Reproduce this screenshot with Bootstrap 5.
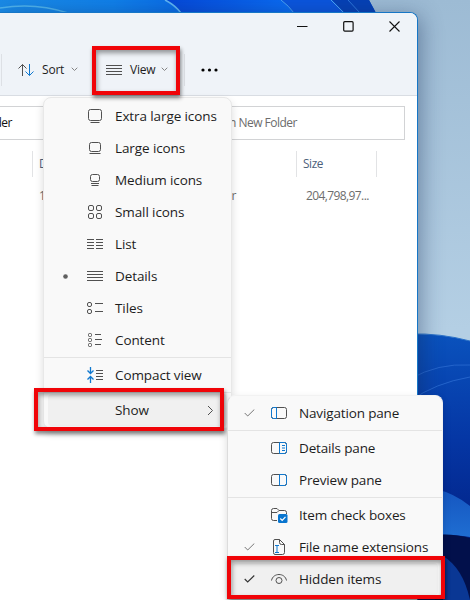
<!DOCTYPE html>
<html lang="en">
<head>
<meta charset="utf-8">
<meta name="viewport" content="width=device-width, initial-scale=1">
<title>New Folder</title>
<link href="https://cdn.jsdelivr.net/npm/bootstrap@5.3.0/dist/css/bootstrap.min.css" rel="stylesheet">
<style>
body{margin:0;background:#fff;font-family:"Open Sans","Noto Sans",sans-serif;color:#1d1d1d}
.desktop{width:470px;height:600px}
.wallpaper{left:0;top:0;z-index:0}
.explorer{z-index:1;width:418px;height:588px;margin-top:12px;border:1px solid #1676c6;border-left:0;border-bottom:0;border-top-right-radius:8px;box-shadow:3px 4px 22px rgba(20,40,80,.42)}
.explorer-head{height:83px;background:#eff3f8;border-bottom:1px solid #d9dde3;border-top-right-radius:7px}
.caption-row{height:27px;padding-right:17px;gap:35px}
.tools{height:56px;font-size:12px;line-height:16px;padding:3px 0 0 1px}
.tools .vr-line{width:1px;height:32px;background:#dde0e5}
.tool-text{letter-spacing:-.2px}
.sort-tool{margin-left:15px;width:61px}
.sort-tool .tool-text,.view-tool .tool-text{margin-left:8px}
.view-tool{margin-left:28px;width:62px}
.view-tool .tool-text{margin-left:7px}
.address{height:34px;margin-top:10px}
.field{border:1px solid #d2d3d5;height:34px;line-height:32px;font-size:12px}
.path-field{width:206px;border-left:0;color:#111}
.path-field .squeeze{margin-left:-8px}
.search-field{width:191px;color:#6c6c6c}
.search-field .squeeze{width:82px;direction:rtl;unicode-bidi:isolate;vertical-align:top}
.field-gap{margin-left:8px}
.squeeze{display:inline-block;letter-spacing:-.5px;white-space:nowrap}
.cols{height:26px;margin-top:11px;padding-top:0;font-size:11.8px;line-height:25px;color:#4c607a}
.cols>div{border-left:1px solid #e2e3e5}
.size-label{letter-spacing:-.4px}
.file{height:20px;margin-top:9px;font-size:12px;line-height:20px;color:#6d6d6d}
.file-kind{width:196px}
.file-size{margin-left:70px;letter-spacing:-.6px}
.flyout{background:#f9f9f9;border-radius:8px;border:1px solid #e8e8e8;box-shadow:0 4px 9px rgba(0,0,0,.14);font-size:13.5px;letter-spacing:-.1px;padding:1px 0}
.main-menu{left:43px;top:97px;width:189px;height:332px;padding-top:2px;z-index:2}
.sub-menu{left:227px;top:395px;width:216px;height:203px;z-index:4;letter-spacing:-.15px;border-color:#f2f2f2 #f2f2f2 #f2f2f2 #dcdcdc}
.entry{height:32px;white-space:nowrap;line-height:20px}
.entry .mark-slot{width:42px;height:32px}
.entry .icon-slot{width:18px;height:18px;margin-right:11px}
.rule{height:1px;margin:1px 0;background:#e4e4e4}
.hover-row{background:#f0f0f0;margin:0 4px;border-radius:4px}
.frame{border:4px solid #f00408;box-shadow:1px 3px 4px rgba(0,0,0,.48),inset 1px 3px 5px rgba(0,0,0,.4);z-index:5}
.frame-view{left:92px;top:46px;width:88px;height:49px}
.frame-show{left:34px;top:388px;width:190px;height:43px;z-index:3}
.frame-hidden{left:227px;top:556px;width:218px;height:43px}
svg{display:block;flex:none}
.ln{fill:none;stroke:#505050;stroke-width:1}
.bl{fill:none;stroke:#0f78cf;stroke-width:1}
.soft{stroke:#858585}
</style>
<script src="https://cdn.jsdelivr.net/npm/bootstrap@5.3.0/dist/js/bootstrap.bundle.min.js"></script>
</head>
<body>
<div class="desktop position-relative overflow-hidden d-flex">
  <svg class="wallpaper position-absolute" width="470" height="600" viewBox="0 0 470 600">
    <defs>
      <linearGradient id="sky" x1="0" y1="0" x2="0" y2="1"><stop offset="0" stop-color="#9dbbd4"/><stop offset=".55" stop-color="#b4cfe4"/></linearGradient>
      <linearGradient id="petal" x1="0" y1="0" x2="1" y2="0"><stop offset="0" stop-color="#1a8ae6"/><stop offset=".3" stop-color="#1080ea"/><stop offset=".47" stop-color="#0a6ce6"/><stop offset=".75" stop-color="#0870f0"/><stop offset="1" stop-color="#0750cf"/></linearGradient>
      <linearGradient id="inner" x1="0" y1="0" x2="1" y2="0"><stop offset="0" stop-color="#0548d8"/><stop offset="1" stop-color="#0a6cf2"/></linearGradient>
      <linearGradient id="deep" x1="0" y1="0" x2="0" y2="1"><stop offset="0" stop-color="#0a52bd"/><stop offset=".4" stop-color="#0536a4"/><stop offset="1" stop-color="#001674"/></linearGradient>
      <linearGradient id="wave" x1="0" y1="0" x2="0" y2="1"><stop offset="0" stop-color="#1556c0"/><stop offset="1" stop-color="#1f6ed2"/></linearGradient>
    </defs>
    <rect width="470" height="600" fill="url(#sky)"/>
    <path d="M0 0H369L376 13H0Z" fill="url(#petal)"/>
    <path d="M0 8Q35 2 68 13" fill="none" stroke="#4fb4ee" stroke-width="1.500"/>
    <path d="M181 13Q176 5 166 0H281Q289 6 294 13Z" fill="url(#inner)"/>
    <path d="M165 0Q175 5 181 13" fill="none" stroke="#60b6f4" stroke-width="1.500"/>
    <path d="M281 0Q289 6 294 13H345L330 0Z" fill="#0b55dd"/>
    <path d="M281 0Q289 6 294 13M331 0L344 13" fill="none" stroke="#4da2f3"/>
    <path d="M332 0H369L376 13H345Z" fill="#0641b5"/>
    <path d="M348 0L360 13" stroke="#2d78db"/>
    <path d="M410 334Q440 333 470 341V600H410Z" fill="url(#deep)"/>
    <path d="M410 334Q440 333 470 341" fill="none" stroke="#2c72c8"/>
    <path d="M410 379Q438 363 470 365M410 401Q435 383 470 377" fill="none" stroke="#2464cb"/>
    <path d="M435 489Q454 493 470 506V537Q450 534 435 535Z" fill="url(#wave)"/>
    <path d="M435 535Q452 533 470 538V600H435Z" fill="#02104b"/>
    <path d="M443 556Q463 568 470 600H443Z" fill="#0a3794"/>
  </svg>

  <main class="explorer position-relative bg-white">
    <div class="explorer-head">
      <div class="caption-row d-flex justify-content-end align-items-center">
        <svg width="11" height="11"><path d="M0 5.500H10.500" stroke="#111"/></svg>
        <svg width="11" height="11"><rect x=".7" y=".7" width="9.400" height="9.400" rx="1" fill="none" stroke="#111" stroke-width="1.200"/></svg>
        <svg width="11" height="11"><path d="M.5.5l10 10m0-10l-10 10" stroke="#111" stroke-width="1.100"/></svg>
      </div>
      <div class="tools d-flex align-items-center">
        <span class="vr-line"></span>
        <div class="sort-tool d-flex align-items-center">
          <svg width="17" height="14"><path class="ln" d="M5.500 13V1.500M1.500 5.500l4-4 4 4"/><path class="bl" d="M12.500 1v11.500M8.500 8.500l4 4 4-4"/></svg>
          <span class="tool-text flex-grow-1">Sort</span>
          <svg width="7" height="5"><path class="ln soft" d="M.7.700l2.800 2.800L6.300.700"/></svg>
        </div>
        <div class="view-tool d-flex align-items-center">
          <svg width="17" height="12"><path class="ln" d="M0 1.500h16M0 4.500h16M0 7.500h16M0 10.500h16"/></svg>
          <span class="tool-text flex-grow-1">View</span>
          <svg width="7" height="5"><path class="ln soft" d="M.7.700l2.800 2.800L6.300.700"/></svg>
        </div>
        <span class="vr-line ms-3"></span>
        <svg class="ms-3" width="17" height="4"><circle cx="2" cy="2" r="1.600"/><circle cx="8.500" cy="2" r="1.600"/><circle cx="15" cy="2" r="1.600"/></svg>
      </div>
    </div>
    <div class="address d-flex">
      <div class="field path-field"><span class="squeeze">lder</span></div>
      <div class="field search-field field-gap"><span class="squeeze">in New Folder</span></div>
    </div>
    <div class="cols d-flex">
      <div style="margin-left:32px;width:264px;padding-left:6px">Date</div>
      <div style="width:80px;padding-left:6px"><span class="squeeze size-label">Size</span></div>
      <div></div>
    </div>
    <div class="file d-flex">
      <span style="margin-left:39px;width:1px">1</span>
      <span class="squeeze text-end file-kind">File folder</span>
      <span class="squeeze file-size">204,798,97...</span>
    </div>
  </main>

  <nav class="flyout main-menu position-absolute">
    <div class="entry d-flex align-items-center"><span class="mark-slot"></span><svg class="icon-slot" viewBox="0 0 18 18"><rect class="ln" x="2.500" y="2.500" width="13" height="11" rx="2"/><path class="ln" d="M4.500 15.500h9"/></svg><span>Extra large icons</span></div>
    <div class="entry d-flex align-items-center"><span class="mark-slot"></span><svg class="icon-slot" viewBox="0 0 18 18"><rect class="ln" x="3.500" y="3.500" width="11" height="9" rx="2"/><path class="ln" d="M3.500 14.500h11"/></svg><span>Large icons</span></div>
    <div class="entry d-flex align-items-center"><span class="mark-slot"></span><svg class="icon-slot" viewBox="0 0 18 18"><rect class="ln" x="4.500" y="3.500" width="9" height="7" rx="2"/><path class="ln" d="M5 12.500h8M5.500 14.500h7"/></svg><span>Medium icons</span></div>
    <div class="entry d-flex align-items-center"><span class="mark-slot"></span><svg class="icon-slot" viewBox="0 0 18 18"><g class="ln"><rect x="2.500" y="2.500" width="5" height="5" rx="1.500"/><rect x="10.500" y="2.500" width="5" height="5" rx="1.500"/><rect x="2.500" y="10.500" width="5" height="5" rx="1.500"/><rect x="10.500" y="10.500" width="5" height="5" rx="1.500"/></g></svg><span>Small icons</span></div>
    <div class="entry d-flex align-items-center"><span class="mark-slot"></span><svg class="icon-slot" viewBox="0 0 18 18"><path class="ln" d="M1 4.500h7M1 7.500h7M1 10.500h7M1 13.500h7M10 4.500h7M10 7.500h7M10 10.500h7M10 13.500h7"/></svg><span>List</span></div>
    <div class="entry d-flex align-items-center"><span class="mark-slot d-flex align-items-center justify-content-center"><svg width="5" height="5"><circle cx="2.500" cy="2.500" r="2.300" fill="#606060"/></svg></span><svg class="icon-slot" viewBox="0 0 18 18"><path class="ln" d="M1 4.500h16M1 7.500h16M1 10.500h16M1 13.500h16"/></svg><span>Details</span></div>
    <div class="entry d-flex align-items-center"><span class="mark-slot"></span><svg class="icon-slot" viewBox="0 0 18 18"><path class="ln" d="M9 4.500h8M9 12.500h8"/><rect class="ln" x="1.500" y="3.500" width="4" height="4" rx="1.500"/><rect class="ln" x="1.500" y="10.500" width="4" height="4" rx="1.500"/></svg><span>Tiles</span></div>
    <div class="entry d-flex align-items-center"><span class="mark-slot"></span><svg class="icon-slot" viewBox="0 0 18 18"><path class="ln" d="M9 3.500h6M9 8.500h7M9 13.500h6"/><rect class="ln" x="2.500" y="2.500" width="3" height="3" rx="1"/><rect class="ln" x="2.500" y="7.500" width="3" height="3" rx="1"/><rect class="ln" x="2.500" y="12.500" width="3" height="3" rx="1"/></svg><span>Content</span></div>
    <div class="rule"></div>
    <div class="entry d-flex align-items-center"><span class="mark-slot"></span><svg class="icon-slot" viewBox="0 0 18 18"><path class="bl" style="stroke-width:1.300" d="M4.500 1v6M1.500 4.500l3 3 3-3M4.500 17v-6M1.500 13.500l3-3 3 3"/><path class="ln" d="M10 4.500h7M10 7.500h7M10 10.500h7M10 13.500h7"/></svg><span>Compact view</span></div>
    <div class="rule"></div>
    <div class="entry hover-row d-flex align-items-center"><span style="width:67px"></span><span class="flex-grow-1">Show</span><svg width="7" height="11" style="margin-right:13px"><path class="ln" d="M1 1l4.500 4.500L1 10"/></svg></div>
  </nav>

  <div class="frame frame-show position-absolute"></div>

  <nav class="flyout sub-menu position-absolute">
    <div class="entry d-flex align-items-center"><span class="mark-slot d-flex align-items-center justify-content-center"><svg width="11" height="8"><path d="M.7 4l3 3L10.300.500" fill="none" stroke="#777"/></svg></span><svg class="icon-slot" viewBox="0 0 18 18"><rect class="ln" x="1.500" y="3.500" width="15" height="11" rx="2"/><path class="bl" d="M6.500 3.500v11h-3q-2 0-2-2v-7q0-2 2-2z"/></svg><span>Navigation pane</span></div>
    <div class="rule"></div>
    <div class="entry d-flex align-items-center"><span class="mark-slot"></span><svg class="icon-slot" viewBox="0 0 18 18"><rect class="ln" x="1.500" y="3.500" width="15" height="11" rx="2"/><path class="bl" d="M9.500 3.500v11h5q2 0 2-2v-7q0-2-2-2zM12 6.500h3M12 9h3M12 11.500h3"/></svg><span>Details pane</span></div>
    <div class="entry d-flex align-items-center"><span class="mark-slot"></span><svg class="icon-slot" viewBox="0 0 18 18"><rect class="ln" x="1.500" y="3.500" width="15" height="11" rx="2"/><path class="bl" d="M9.500 3.500v11h5q2 0 2-2v-7q0-2-2-2z"/></svg><span>Preview pane</span></div>
    <div class="rule"></div>
    <div class="entry d-flex align-items-center"><span class="mark-slot"></span><svg class="icon-slot" viewBox="0 0 18 18"><path class="ln" d="M7 14.500H3.500q-2 0-2-2v-8q0-2 2-2H7l2 2h5.500q2 0 2 2V8M1.500 6.500H7l2-2"/><rect x="8" y="8" width="9.500" height="9" rx="1.500" fill="#0875cf"/><path d="M10.300 12.500l1.900 1.900 3.300-3.600" fill="none" stroke="#fff" stroke-width="1.200"/></svg><span>Item check boxes</span></div>
    <div class="entry d-flex align-items-center"><span class="mark-slot d-flex align-items-center justify-content-center"><svg width="11" height="8"><path d="M.7 4l3 3L10.300.500" fill="none" stroke="#777"/></svg></span><svg class="icon-slot" viewBox="0 0 18 18"><path class="ln" d="M5 1.500H9.500l5 5v8q0 2-2 2H5q-1.500 0-1.500-2V3q0-1.500 1.500-1.500M9.500 1.500v3q0 2 2 2h3"/><path class="bl" d="M5 7.500h4M5 14.500h4M7 7.500v7"/></svg><span>File name extensions</span></div>
    <div class="entry hover-row d-flex align-items-center"><span class="mark-slot d-flex align-items-center justify-content-center" style="width:34px"><svg width="11" height="8"><path d="M.7 4l3 3L10.300.500" fill="none" stroke="#333" stroke-width="1.100"/></svg></span><svg class="icon-slot" viewBox="0 0 18 18" style="margin-left:4px"><path class="ln" d="M1.500 10.500C3 2.500 15 2.500 16.500 10.500"/><circle class="ln" cx="9" cy="10.500" r="3"/></svg><span>Hidden items</span></div>
  </nav>

  <div class="frame frame-view position-absolute"></div>
  <div class="frame frame-hidden position-absolute"></div>
</div>
</body>
</html>
